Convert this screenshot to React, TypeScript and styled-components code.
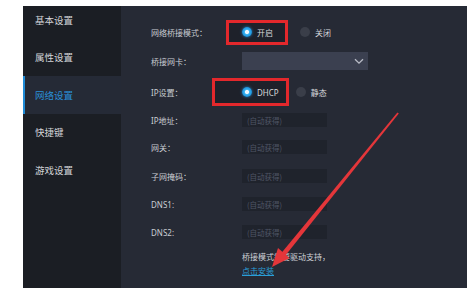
import React from "react";
import styled, { createGlobalStyle } from "styled-components";

const Global = createGlobalStyle`
  html, body { margin: 0; padding: 0; background: #ffffff; }
  body { font-family: "Noto Sans CJK SC", "Noto Sans", sans-serif; }
`;

const Page = styled.div`
  position: relative;
  width: 467px;
  height: 288px;
  padding: 6px 0 0 23px;
  box-sizing: border-box;
  overflow: hidden;
`;

const Frame = styled.div`
  display: flex;
  height: 282px;
  overflow: hidden;
`;

const Sidebar = styled.nav`
  width: 98px;
  flex-shrink: 0;
  background: #1b1e24;
  display: flex;
  flex-direction: column;
`;

const NavList = styled.div`
  display: flex;
  flex-direction: column;
  margin-top: -5px;
`;

const NavItem = styled.div<{ $active?: boolean }>`
  height: 37.5px;
  display: flex;
  align-items: center;
  padding-left: 10px;
  box-sizing: border-box;
  font-size: 9.5px;
  color: ${(p) => (p.$active ? "#2a8fd6" : "#d2d4d8")};
  background: ${(p) => (p.$active ? "#252a36" : "transparent")};
  border-left: 2px solid ${(p) => (p.$active ? "#1f8bd6" : "transparent")};
`;

const Main = styled.main`
  flex: 1;
  background: #262a35;
  padding: 12px 0 0 30px;
  display: flex;
  flex-direction: column;
`;

const Row = styled.div<{ $h: number }>`
  display: flex;
  align-items: center;
  height: ${(p) => p.$h}px;
`;

const Label = styled.div`
  width: 91px;
  flex-shrink: 0;
  font-size: 8px;
  color: #c9ccd2;
  font-family: "Noto Sans", "Noto Sans CJK SC", sans-serif;
`;

const RadioGroup = styled.div`
  display: flex;
  align-items: center;
`;

const Marked = styled.div<{ $ml: number; $pl: number; $pr: number; $h: number; $gap: number }>`
  display: flex;
  align-items: center;
  height: ${(p) => p.$h}px;
  box-sizing: border-box;
  border: 3px solid #e3282c;
  background: #1e212a;
  margin-left: ${(p) => p.$ml}px;
  padding-left: ${(p) => p.$pl}px;
  padding-right: ${(p) => p.$pr}px;
  margin-right: ${(p) => p.$gap}px;
`;

const Option = styled.label`
  display: flex;
  align-items: center;
  gap: 5px;
  font-size: 8px;
  color: #d6d8dc;
  font-family: "Noto Sans", "Noto Sans CJK SC", sans-serif;
`;

const Dot = styled.span<{ $on?: boolean }>`
  width: 10px;
  height: 10px;
  border-radius: 50%;
  display: inline-block;
  background: ${(p) =>
    p.$on
      ? "radial-gradient(circle, #eaf8ff 0 1.6px, #35b2f2 2.6px, #1b8ed6 5px)"
      : "#3a3e49"};
  box-shadow: ${(p) => (p.$on ? "0 0 3px rgba(40,160,240,0.7)" : "none")};
`;

const Select = styled.div`
  width: 126px;
  height: 18px;
  background: #3b4050;
  display: flex;
  align-items: center;
  justify-content: flex-end;
  padding-right: 4px;
  box-sizing: border-box;
`;

const Input = styled.div`
  width: 85px;
  height: 14px;
  background: #1f232c;
  display: flex;
  align-items: center;
  padding-left: 5px;
  box-sizing: border-box;
  font-size: 7.5px;
  color: #4f5565;
`;

const Note = styled.div`
  margin: 4px 0 0 91px;
  display: flex;
  flex-direction: column;
  font-size: 8px;
  line-height: 14px;
  color: #cfd2d8;
`;

const Link = styled.a`
  color: #2a9fd8;
  text-decoration: underline;
  width: fit-content;
`;

const Overlay = styled.svg`
  position: absolute;
  left: 0;
  top: 0;
  pointer-events: none;
`;

const fields = [
  { label: "IP地址：", h: 24 },
  { label: "网关：", h: 30 },
  { label: "子网掩码：", h: 28 },
  { label: "DNS1:", h: 28 },
  { label: "DNS2:", h: 28 },
];

export default function App() {
  return (
    <>
      <Global />
      <Page>
        <Frame>
          <Sidebar>
            <NavList>
              <NavItem>基本设置</NavItem>
              <NavItem>属性设置</NavItem>
              <NavItem $active>网络设置</NavItem>
              <NavItem>快捷键</NavItem>
              <NavItem>游戏设置</NavItem>
            </NavList>
          </Sidebar>
          <Main>
            <Row $h={28}>
              <Label>网络桥接模式：</Label>
              <RadioGroup>
                <Marked $ml={-16} $pl={13} $pr={12} $h={25} $gap={12}>
                  <Option>
                    <Dot $on />
                    开启
                  </Option>
                </Marked>
                <Option>
                  <Dot />
                  关闭
                </Option>
              </RadioGroup>
            </Row>
            <Row $h={30}>
              <Label>桥接网卡：</Label>
              <Select>
                <svg width="10" height="7" viewBox="0 0 10 7">
                  <path d="M1 1.2 L5 5.2 L9 1.2" fill="none" stroke="#b9bcc6" strokeWidth="1.3" />
                </svg>
              </Select>
            </Row>
            <Row $h={32}>
              <Label>IP设置：</Label>
              <RadioGroup>
                <Marked $ml={-30} $pl={27} $pr={7} $h={28} $gap={7}>
                  <Option>
                    <Dot $on />
                    DHCP
                  </Option>
                </Marked>
                <Option>
                  <Dot />
                  静态
                </Option>
              </RadioGroup>
            </Row>
            {fields.map((f) => (
              <Row key={f.label} $h={f.h}>
                <Label>{f.label}</Label>
                <Input>(自动获得)</Input>
              </Row>
            ))}
            <Note>
              <span>桥接模式需要驱动支持，</span>
              <Link>点击安装</Link>
            </Note>
          </Main>
        </Frame>
        <Overlay width="467" height="288" viewBox="0 0 467 288">
          <polygon points="398.8,113.6 397.4,112.5 281.2,253.2 284.8,256.3" fill="#e4363a" />
          <polygon points="272,267 289.5,258 278,248" fill="#e4363a" />
        </Overlay>
      </Page>
    </>
  );
}
